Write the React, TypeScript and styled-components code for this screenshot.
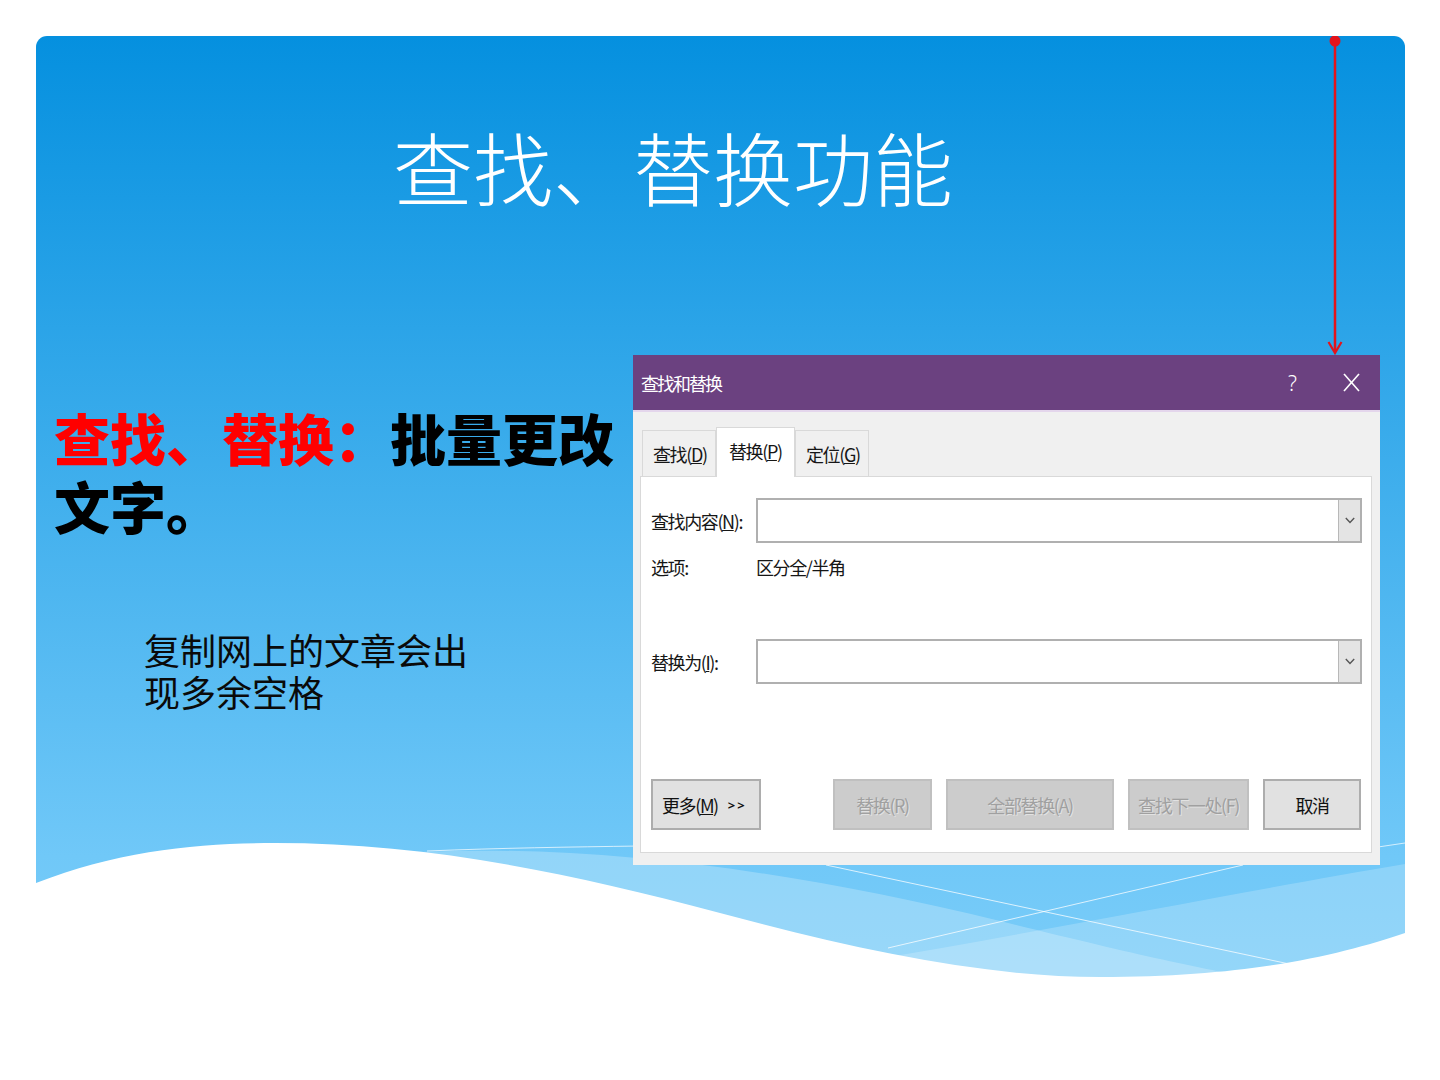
import React from "react";
import styled, { createGlobalStyle } from "styled-components";

const Global = createGlobalStyle`
  html, body { margin: 0; padding: 0; background: #ffffff; }
  body { font-family: "Noto Sans CJK SC", "Noto Sans", sans-serif; }
`;

const Page = styled.div`
  width: 1440px;
  height: 1080px;
  padding: 36px 35px 0 36px;
  box-sizing: border-box;
  background: #ffffff;
  overflow: hidden;
`;

const Slide = styled.section`
  position: relative;
  width: 1369px;
  height: 964px;
  border-radius: 11px 11px 0 0;
  background: linear-gradient(180deg, #0590df 0px, #70c8f8 820px, #7ccdf8 964px);
  overflow: hidden;
  display: flex;
  flex-direction: column;
`;

const Title = styled.h1`
  margin: 0;
  padding: 89px 0 0 357px;
  font: 300 80px/80px "Noto Sans CJK SC", "Noto Sans", sans-serif;
  color: #ffffff;
`;

const Content = styled.div`
  position: relative;
  z-index: 1;
  display: flex;
  margin-top: 150px;
`;

const LeftCol = styled.div`
  width: 597px;
  box-sizing: border-box;
  padding: 48px 0 0 18px;
`;

const Heading = styled.h2`
  margin: 0;
  font: 900 56px/68px "Noto Sans CJK SC", "Noto Sans", sans-serif;
  color: #000000;
`;

const Red = styled.span`
  color: #ff0000;
`;

const Note = styled.p`
  margin: 89px 0 0 90px;
  font: 400 36px/42px "Noto Sans CJK SC", "Noto Sans", sans-serif;
  color: #0a0a0a;
`;

const Dialog = styled.div`
  width: 747px;
  height: 510px;
  background: #f0f0f0;
  display: flex;
  flex-direction: column;
  box-sizing: border-box;
  font: 400 18px/24px "Noto Sans CJK SC", "Noto Sans", sans-serif;
  letter-spacing: -1.4px;
  color: #161616;
`;

const TitleBar = styled.div`
  height: 55px;
  background: #6b4180;
  border-bottom: 2px solid #e4d6ec;
  display: flex;
  align-items: center;
  padding: 0 20px 0 8px;
  color: #ffffff;
  letter-spacing: -2px;
`;

const TitleText = styled.span`
  flex: 1;
`;

const Help = styled.span`
  font: 300 21px/24px "Noto Sans", sans-serif;
  letter-spacing: 0;
  margin-right: 46px;
`;

const TabStrip = styled.div`
  display: flex;
  align-items: flex-end;
  padding: 15px 0 0 9px;
  position: relative;
  z-index: 1;
`;

const Tab = styled.div<{ $active?: boolean; $w: number }>`
  width: ${(p) => p.$w}px;
  height: ${(p) => (p.$active ? 50 : 46)}px;
  box-sizing: border-box;
  background: ${(p) => (p.$active ? "#ffffff" : "#f0f0f0")};
  border: 1px solid #d9d9d9;
  border-bottom: none;
  margin-bottom: ${(p) => (p.$active ? -1 : 0)}px;
  display: flex;
  align-items: center;
  padding: ${(p) => (p.$active ? "0 0 4px 12px" : "0 0 0 10px")};
`;

const Panel = styled.div`
  margin: 0 8px 0 7px;
  height: 377px;
  box-sizing: border-box;
  background: #ffffff;
  border: 1px solid #d9d9d9;
  padding: 21px 9px 0 10px;
  display: flex;
  flex-direction: column;
`;

const FieldRow = styled.div<{ $top: number }>`
  display: grid;
  grid-template-columns: 105px 1fr;
  align-items: center;
  margin-top: ${(p) => p.$top}px;
`;

const Combo = styled.div`
  height: 45px;
  box-sizing: border-box;
  border: 2px solid #b0b0b0;
  background: #ffffff;
  display: flex;
  justify-content: flex-end;
`;

const ComboButton = styled.div`
  width: 21px;
  background: #e4e4e4;
  border-left: 1px solid #b8b8b8;
  display: flex;
  align-items: center;
  justify-content: center;
`;

const ButtonRow = styled.div`
  display: flex;
  gap: 14px;
  margin-top: 95px;
  padding-right: 1px;
`;

const Btn = styled.div<{ $w: number; $disabled?: boolean; $left?: boolean }>`
  width: ${(p) => p.$w}px;
  height: 51px;
  box-sizing: border-box;
  border: 2px solid ${(p) => (p.$disabled ? "#c0c0c0" : "#adadad")};
  background: ${(p) => (p.$disabled ? "#cccccc" : "#e1e1e1")};
  color: ${(p) => (p.$disabled ? "#a0a0a0" : "#111111")};
  text-shadow: ${(p) => (p.$disabled ? "1px 1px 0 #e2e2e2" : "none")};
  display: flex;
  align-items: center;
  justify-content: ${(p) => (p.$left ? "flex-start" : "center")};
  padding-left: ${(p) => (p.$left ? "9px" : "0")};
  &:nth-child(2) {
    margin-left: auto;
  }
`;

const Arrows = styled.span`
  font: 700 13px/20px "Noto Sans", sans-serif;
  letter-spacing: 2px;
  margin-left: 10px;
`;

const WaveArt = styled.svg`
  position: absolute;
  left: 0;
  bottom: 0;
  z-index: 0;
`;

const Pointer = styled.svg`
  position: absolute;
  left: 1291px;
  top: 0;
  z-index: 2;
`;

const Chevron = () => (
  <svg width="10" height="7" viewBox="0 0 10 7">
    <polyline points="0.8,1 5,5.5 9.2,1" fill="none" stroke="#555" strokeWidth="1.4" />
  </svg>
);

const CloseIcon = () => (
  <svg width="17" height="19" viewBox="0 0 17 19">
    <line x1="1" y1="1" x2="16" y2="18" stroke="#fff" strokeWidth="1.6" />
    <line x1="16" y1="1" x2="1" y2="18" stroke="#fff" strokeWidth="1.6" />
  </svg>
);

export default function App() {
  return (
    <>
      <Global />
      <Page>
        <Slide>
          <WaveArt width="1369" height="170" viewBox="36 830 1369 170">
            <path
              d="M 420 852 C 600 844, 800 872, 1000 921 S 1250 980, 1405 1000 L 420 1000 Z"
              fill="#ffffff"
              fillOpacity="0.24"
            />
            <path
              d="M 1405 864 C 1250 890, 1050 930, 860 962 L 860 1000 L 1405 1000 Z"
              fill="#ffffff"
              fillOpacity="0.2"
            />
            <path d="M 427 851 C 500 848, 570 847, 640 846" stroke="#ffffff" strokeOpacity="0.7" strokeWidth="1" fill="none" />
            <line x1="1378" y1="847" x2="1405" y2="843" stroke="#ffffff" strokeOpacity="0.7" strokeWidth="1" />
            <line x1="826" y1="865" x2="1294" y2="965" stroke="#ffffff" strokeOpacity="0.75" strokeWidth="1" />
            <line x1="1243" y1="865" x2="888" y2="948" stroke="#ffffff" strokeOpacity="0.75" strokeWidth="1" />
            <path
              d="M 36 883 C 120 850, 200 843, 275 843 C 420 843, 560 870, 720 913 C 850 948, 980 977, 1100 977 C 1250 977, 1340 955, 1405 933 L 1405 1000 L 36 1000 Z"
              fill="#ffffff"
            />
          </WaveArt>
          <Pointer width="16" height="322" viewBox="0 0 16 322">
            <line x1="8" y1="5" x2="8" y2="316" stroke="#e3141b" strokeWidth="2.5" />
            <circle cx="8" cy="5" r="5.5" fill="#e3141b" />
            <polyline points="1.5,306 8,317 14.5,306" fill="none" stroke="#e3141b" strokeWidth="2.2" />
          </Pointer>

          <Title>查找、替换功能</Title>

          <Content>
            <LeftCol>
              <Heading>
                <Red>查找、替换：</Red>批量更改
                <br />
                文字。
              </Heading>
              <Note>
                复制网上的文章会出
                <br />
                现多余空格
              </Note>
            </LeftCol>

            <Dialog>
              <TitleBar>
                <TitleText>查找和替换</TitleText>
                <Help>?</Help>
                <CloseIcon />
              </TitleBar>
              <TabStrip>
                <Tab $w={74}>
                  查找(<u>D</u>)
                </Tab>
                <Tab $w={79} $active>
                  替换(<u>P</u>)
                </Tab>
                <Tab $w={74}>
                  定位(<u>G</u>)
                </Tab>
              </TabStrip>
              <Panel>
                <FieldRow $top={0}>
                  <span>
                    查找内容(<u>N</u>):
                  </span>
                  <Combo>
                    <ComboButton>
                      <Chevron />
                    </ComboButton>
                  </Combo>
                </FieldRow>
                <FieldRow $top={12}>
                  <span>选项:</span>
                  <span>区分全/半角</span>
                </FieldRow>
                <FieldRow $top={60}>
                  <span>
                    替换为(<u>I</u>):
                  </span>
                  <Combo>
                    <ComboButton>
                      <Chevron />
                    </ComboButton>
                  </Combo>
                </FieldRow>
                <ButtonRow>
                  <Btn $w={110} $left>
                    更多(<u>M</u>)<Arrows>&gt;&gt;</Arrows>
                  </Btn>
                  <Btn $w={99} $disabled>
                    替换(R)
                  </Btn>
                  <Btn $w={168} $disabled>
                    全部替换(A)
                  </Btn>
                  <Btn $w={121} $disabled>
                    查找下一处(F)
                  </Btn>
                  <Btn $w={98}>取消</Btn>
                </ButtonRow>
              </Panel>
            </Dialog>
          </Content>
        </Slide>
      </Page>
    </>
  );
}
